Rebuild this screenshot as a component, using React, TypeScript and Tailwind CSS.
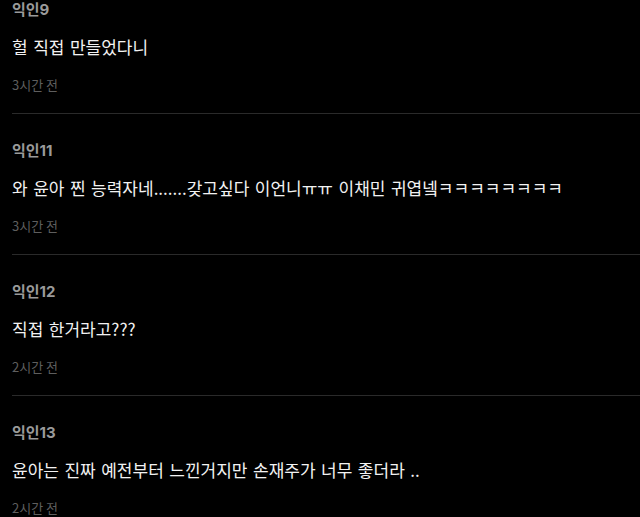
import React from "react";

const items = [
  { name: "익인9", body: "헐 직접 만들었다니", time: "3시간 전" },
  {
    name: "익인11",
    body: "와 윤아 찐 능력자네.......갖고싶다 이언니ㅠㅠ 이채민 귀엽넼ㅋㅋㅋㅋㅋㅋㅋㅋ",
    time: "3시간 전",
  },
  { name: "익인12", body: "직접 한거라고???", time: "2시간 전" },
  { name: "익인13", body: "윤아는 진짜 예전부터 느낀거지만 손재주가 너무 좋더라 ..", time: "2시간 전" },
];

export default function App() {
  return (
    <div
      className="w-[640px] h-[517px] overflow-hidden bg-black"
      style={{ fontFamily: '"Noto Sans CJK KR", "Noto Sans", sans-serif' }}
    >
      <div className="pl-[12px]">
        {items.map((it, i) => (
          <div
            key={i}
            className="pt-[27px] first:pt-0 pb-[19px] border-b border-[#2a2a2a]"
          >
            <div
              className="text-[15px] leading-[20px] font-bold text-[#9a9a9a]"
              style={{ fontFamily: 'Inter, "Noto Sans CJK KR", sans-serif' }}
            >
              {it.name}
            </div>
            <div className="mt-[15px] text-[17px] leading-[24px] text-[#f2f2f2] whitespace-nowrap [word-spacing:1.7px]">
              {it.body}
            </div>
            <div className="mt-[17px] text-[13px] leading-[18px] text-[#5e5e5e]">{it.time}</div>
          </div>
        ))}
      </div>
    </div>
  );
}
